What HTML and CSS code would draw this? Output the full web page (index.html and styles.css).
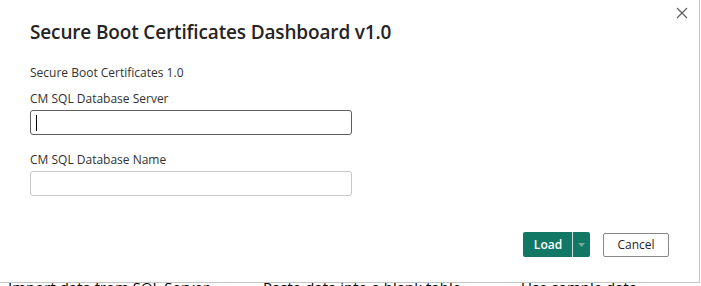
FILE: index.html
```html
<!DOCTYPE html>
<html>
<head>
<meta charset="utf-8">
<link rel="stylesheet" href="styles.css">
</head>
<body>
<div class="page">
  <div class="backdrop-row">
    <span class="bg-item bg-sql">Import data from SQL Server</span>
    <span class="bg-item bg-paste">Paste data into a blank table</span>
    <span class="bg-item bg-sample">Use sample data</span>
  </div>
  <div class="dialog">
    <button class="close" aria-label="Close">
      <svg width="12" height="12" viewBox="0 0 12 12"><path d="M1 1L11 11M11 1L1 11" stroke="#605e5c" stroke-width="1.2" fill="none"/></svg>
    </button>
    <h1 class="title">Secure Boot Certificates Dashboard v1.0</h1>
    <div class="subtitle">Secure Boot Certificates 1.0</div>
    <div class="field">
      <label class="label">CM SQL Database Server</label>
      <div class="input focused"><span class="caret"></span></div>
    </div>
    <div class="field second">
      <label class="label">CM SQL Database Name</label>
      <div class="input"></div>
    </div>
    <div class="actions">
      <div class="split">
        <span class="split-main">Load</span>
        <span class="split-div"></span>
        <span class="split-arrow"><svg width="7" height="4" viewBox="0 0 7 4"><path d="M0 0H7L3.5 4Z" fill="#7fa89c"/></svg></span>
      </div>
      <button class="cancel">Cancel</button>
    </div>
  </div>
</div>
</body>
</html>
```
FILE: styles.css
```css
html, body {
  margin: 0;
  padding: 0;
  width: 701px;
  height: 286px;
  overflow: hidden;
  background: #ffffff;
}
.page {
  position: relative;
  width: 701px;
  height: 286px;
  font-family: "Open Sans", "Segoe UI", sans-serif;
  color: #252423;
}
.backdrop-row {
  display: flex;
  padding-top: 277px;
  padding-left: 8px;
  font-size: 15px;
  line-height: 20px;
  color: #000;
  font-family: "Open Sans", sans-serif;
}
.bg-sql { width: 255px; }
.bg-paste { width: 258px; }
.dialog {
  position: absolute;
  top: 0;
  left: 0;
  width: 700px;
  height: 283px;
  box-sizing: border-box;
  background: #fff;
  border-right: 1px solid #c6c6c6;
  border-bottom: 1px solid #c6c6c6;
  padding: 18px 0 0 30px;
}
.close {
  position: absolute;
  top: 6px;
  right: 10px;
  width: 14px;
  height: 14px;
  padding: 0;
  border: 0;
  background: none;
  display: flex;
  align-items: center;
  justify-content: center;
}
.title {
  margin: 0;
  font-size: 19px;
  font-weight: 600;
  line-height: 28px;
  color: #252423;
  letter-spacing: -0.15px;
}
.subtitle {
  margin-top: 19px;
  font-size: 12px;
  line-height: 16px;
  color: #323130;
}
.field {
  margin-top: 10px;
  display: flex;
  flex-direction: column;
}
.field.second { margin-top: 17px; }
.label {
  font-size: 12px;
  line-height: 16px;
  color: #323130;
}
.input {
  margin-top: 3px;
  width: 322px;
  height: 25px;
  box-sizing: border-box;
  border: 1px solid #c8c6c4;
  border-radius: 3px;
  display: flex;
  align-items: center;
  padding-left: 5px;
}
.input.focused { border-color: #605e5c; }
.caret {
  width: 1px;
  height: 16px;
  background: #000;
}
.actions {
  display: flex;
  justify-content: flex-end;
  align-items: center;
  gap: 13px;
  margin-top: 36px;
  padding-right: 30px;
}
.split {
  display: flex;
  align-items: stretch;
  height: 25px;
  background: #117865;
  border-radius: 2px;
  color: #fff;
  font-size: 12px;
  font-weight: 600;
}
.split-main {
  display: flex;
  align-items: center;
  padding: 0 10px 0 11px;
  width: 28px;
  justify-content: center;
}
.split-div {
  width: 1px;
  background: #c9dcd6;
}
.split-arrow {
  width: 17px;
  display: flex;
  align-items: center;
  justify-content: center;
}
.cancel {
  height: 24px;
  width: 66px;
  box-sizing: border-box;
  border: 1px solid #8a8886;
  border-radius: 2px;
  background: #fff;
  font-family: "Open Sans", sans-serif;
  font-size: 12px;
  color: #252423;
  padding: 0;
}
```
